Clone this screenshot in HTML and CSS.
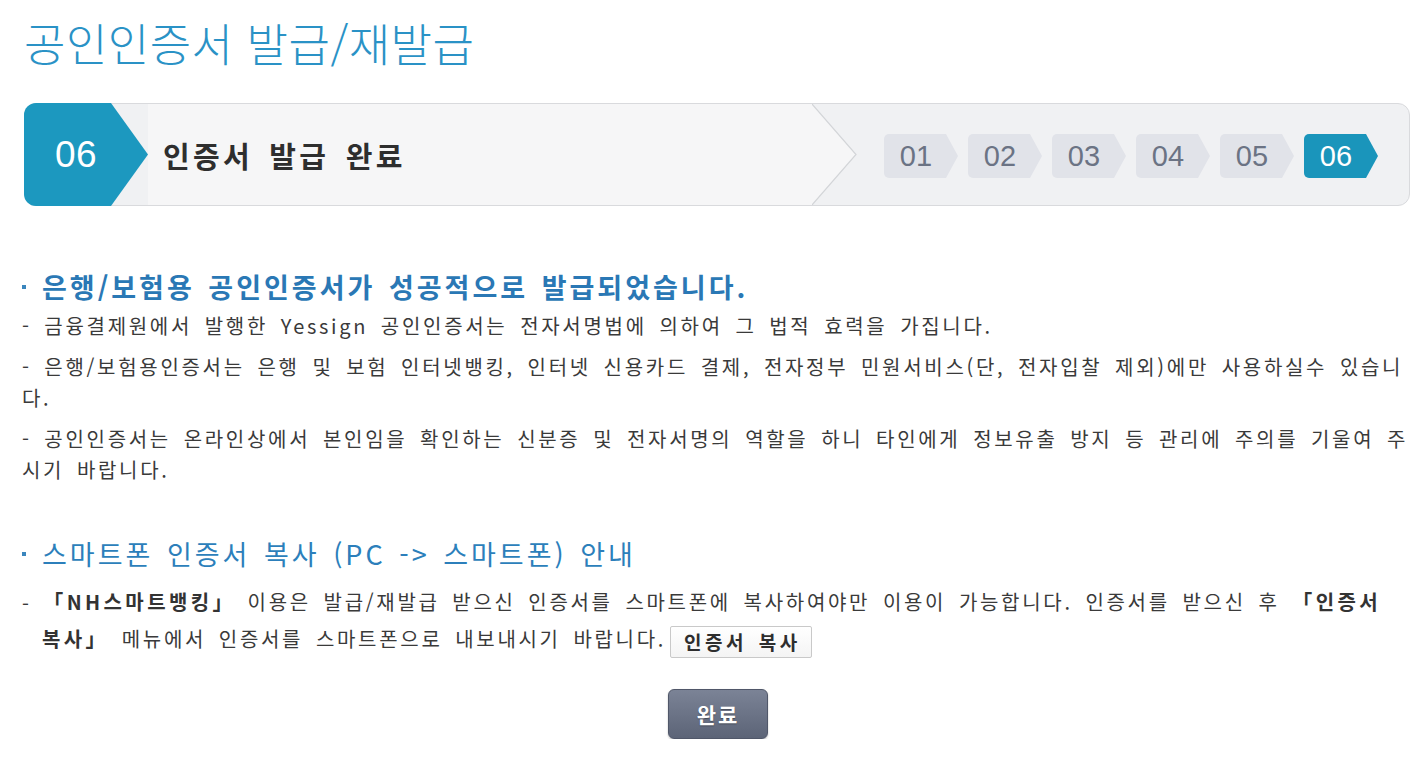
FILE: index.html
```html
<!DOCTYPE html>
<html lang="ko">
<head>
<meta charset="utf-8">
<title>공인인증서 발급/재발급</title>
<link rel="stylesheet" href="styles.css">
</head>
<body>
<div class="page">
  <h1 class="page-title">공인인증서 발급/재발급</h1>

  <div class="stepbar">
    <div class="cur-step"><span class="cur-num">06</span></div>
    <div class="step-name">인증서 발급 완료</div>
    <svg class="chevron" width="46" height="101" viewBox="0 0 46 101" aria-hidden="true">
      <polygon points="0,0 44,50.5 0,101" fill="#f6f6f7"/>
      <polyline points="0,0 44,50.5 0,101" fill="none" stroke="#d3d5d8" stroke-width="1.2"/>
    </svg>
    <ol class="steps">
      <li class="pill">01</li>
      <li class="pill">02</li>
      <li class="pill">03</li>
      <li class="pill">04</li>
      <li class="pill">05</li>
      <li class="pill pill-on">06</li>
    </ol>
  </div>

  <section class="section sec-done">
    <h2 class="sec-title sec-title-bold">은행/보험용 공인인증서가 성공적으로 발급되었습니다.</h2>
    <ul class="notes">
      <li>- 금융결제원에서 발행한 Yessign 공인인증서는 전자서명법에 의하여 그 법적 효력을 가집니다.</li>
      <li>- 은행/보험용인증서는 은행 및 보험 인터넷뱅킹, 인터넷 신용카드 결제, 전자정부 민원서비스(단, 전자입찰 제외)에만 사용하실수 있습니다.</li>
      <li>- 공인인증서는 온라인상에서 본인임을 확인하는 신분증 및 전자서명의 역할을 하니 타인에게 정보유출 방지 등 관리에 주의를 기울여 주시기 바랍니다.</li>
    </ul>
  </section>

  <section class="section sec-phone">
    <h2 class="sec-title">스마트폰 인증서 복사 (PC -&gt; 스마트폰) 안내</h2>
    <p class="phone-note">- <b>「NH스마트뱅킹」</b> 이용은 발급/재발급 받으신 인증서를 스마트폰에 복사하여야만 이용이 가능합니다. 인증서를 받으신 후 <b>「인증서</b> <b>복사」</b> 메뉴에서 인증서를 스마트폰으로 내보내시기 바랍니다.<button class="copy-btn" type="button">인증서 복사</button></p>
  </section>

  <div class="actions">
    <button class="done-btn" type="button">완료</button>
  </div>
</div>
</body>
</html>
```

FILE: styles.css
```css
html, body {
  margin: 0;
  padding: 0;
  background: #ffffff;
}

body {
  font-family: "Noto Sans CJK KR", "Noto Sans", sans-serif;
  color: #3a3a3a;
}

.page {
  padding: 18px 5px 0 22px;
}

.page-title {
  margin: 0 0 0 2px;
  font-size: 45px;
  line-height: 50px;
  font-weight: 300;
  letter-spacing: 0.5px;
  color: #2a92c6;
}

/* step bar */
.stepbar {
  margin: 35px 0 0 2px;
  width: 1384px;
  height: 101px;
  border: 1px solid #d9dadd;
  border-radius: 12px;
  background: #f0f1f3;
  display: flex;
  align-items: stretch;
}

.cur-step {
  width: 124px;
  margin: -1px 0 -1px -1px;
  background: #1c98bf;
  border-radius: 12px 0 0 12px;
  clip-path: polygon(0 0, 87px 0, 124px 50%, 87px 100%, 0 100%);
  display: flex;
  align-items: center;
}

.cur-num {
  padding-left: 31px;
  font-family: "Liberation Sans", Arial, sans-serif;
  font-size: 37px;
  color: #ffffff;
  letter-spacing: 0.5px;
}

.step-name {
  width: 664px;
  background: #f6f6f7;
  display: flex;
  align-items: center;
  padding-left: 15px;
  box-sizing: border-box;
  font-size: 29px;
  font-weight: 700;
  letter-spacing: 3.3px;
  word-spacing: 5px;
  color: #2e2e2e;
}

.chevron {
  flex: none;
  display: block;
}

.steps {
  list-style: none;
  margin: 3px 0 0 26px;
  padding: 0;
  display: flex;
  align-items: center;
  gap: 10px;
}

.pill {
  width: 74px;
  height: 44px;
  box-sizing: border-box;
  padding-right: 10px;
  display: flex;
  align-items: center;
  justify-content: center;
  background: #e1e3e9;
  color: #6b7384;
  border-radius: 5px 0 0 5px;
  clip-path: polygon(0 0, 62px 0, 74px 50%, 62px 100%, 0 100%);
  font-family: "Liberation Sans", Arial, sans-serif;
  font-size: 29px;
}

.pill-on {
  background: #1a95bb;
  color: #ffffff;
}

/* sections */
.section {
  width: 1398px;
}

.sec-done {
  margin-top: 64px;
}

.sec-phone {
  margin-top: 52px;
}

.sec-title {
  margin: 0;
  display: flex;
  align-items: center;
  font-size: 27px;
  line-height: 34px;
  font-weight: 400;
  letter-spacing: 3px;
  word-spacing: 3px;
  color: #2c7fbb;
}

.sec-title::before {
  content: "";
  width: 4px;
  height: 4px;
  margin-right: 16px;
  background: #3a86bd;
  flex: none;
}

.sec-title-bold {
  font-weight: 700;
  color: #2a78b5;
}

.notes {
  list-style: none;
  margin: 6px 0 0 0;
  padding: 0;
}

.notes li {
  font-size: 20px;
  line-height: 31px;
  letter-spacing: 2.7px;
  word-spacing: 4.4px;
  margin-bottom: 10px;
}

.notes li:last-child {
  margin-bottom: 0;
}

.phone-note {
  margin: 12px 0 0 0;
  padding-left: 20px;
  text-indent: -20px;
  font-size: 20px;
  line-height: 37px;
  letter-spacing: 2.7px;
  word-spacing: 4.4px;
  word-break: keep-all;
}

.phone-note b {
  font-weight: 700;
  color: #333333;
  letter-spacing: 3.4px;
}

.copy-btn {
  text-indent: 0;
  font-family: "Noto Sans CJK KR", sans-serif;
  font-size: 19px;
  font-weight: 700;
  letter-spacing: 3.5px;
  word-spacing: 3px;
  color: #2e2e2e;
  height: 32px;
  padding: 0 10px 0 13px;
  line-height: 28px;
  border: 1px solid #c9c9c9;
  border-radius: 2px;
  background: linear-gradient(#ffffff, #f4f4f4);
  vertical-align: middle;
  margin-left: 4px;
}

.actions {
  width: 1388px;
  display: flex;
  justify-content: center;
  margin-top: 31px;
}

.done-btn {
  width: 100px;
  height: 50px;
  margin-left: 4px;
  border: 1px solid #505769;
  border-radius: 6px;
  background: linear-gradient(#7b8396, #5c6477);
  box-shadow: 0 1px 2px rgba(0, 0, 0, 0.25);
  font-family: "Noto Sans CJK KR", sans-serif;
  font-size: 21px;
  font-weight: 700;
  letter-spacing: 2px;
  color: #ffffff;
  text-shadow: 0 1px 1px rgba(0, 0, 0, 0.35);
}
```
